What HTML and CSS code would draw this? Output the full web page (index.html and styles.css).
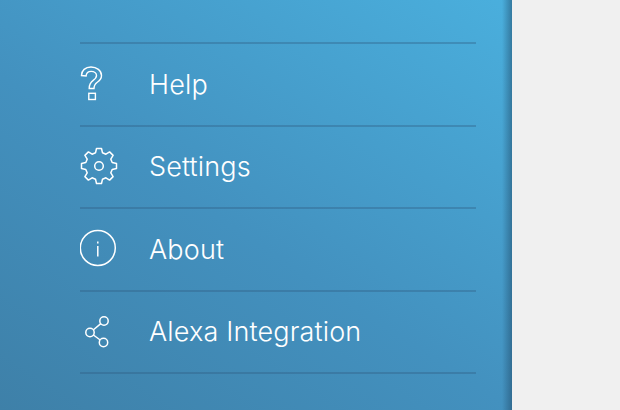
FILE: index.html
```html
<!DOCTYPE html>
<html lang="en">
<head>
<meta charset="utf-8">
<title>Menu</title>
<link rel="stylesheet" href="styles.css">
</head>
<body>
<nav class="panel">
  <ul class="menu">
    <li class="row">
      <span class="icon">
        <svg width="40" height="40" viewBox="0 0 40 40" fill="none" stroke="#fff" stroke-width="1.4">
          <path d="M1.500 11.500c0-5 3.800-8.500 9.500-8.500s10.500 3.500 10.500 8.400c0 3.200-1.900 5.200-4.200 6.800-2.300 1.600-3.300 3-3.300 6.300h-4.800c0-4.400 1.400-6.300 4-8.100 2-1.400 3.300-2.700 3.300-4.800 0-2.600-2.400-4.200-5.300-4.200-3 0-4.900 1.700-5.100 4.500z"/>
          <rect x="8.800" y="29.300" width="6.600" height="6.200"/>
        </svg>
      </span>
      <span class="label">Help</span>
    </li>
    <li class="row">
      <span class="icon">
        <svg width="40" height="40" viewBox="0 0 40 40" fill="none" stroke="#fff" stroke-width="1.500" stroke-linejoin="round">
          <path d="M16.500 1.500h5l1 4.300 3.400 1.400 3.700-2.300 3.500 3.500-2.300 3.700 1.400 3.400 4.300 1v5l-4.300 1-1.400 3.400 2.300 3.700-3.500 3.500-3.700-2.300-3.400 1.400-1 4.300h-5l-1-4.300-3.400-1.400-3.700 2.300-3.500-3.500 2.300-3.700-1.400-3.400-4.300-1v-5l4.300-1 1.400-3.400-2.300-3.700 3.500-3.500 3.700 2.300 3.400-1.400z"/>
          <circle cx="19" cy="19" r="4.300"/>
        </svg>
      </span>
      <span class="label">Settings</span>
    </li>
    <li class="row">
      <span class="icon">
        <svg width="40" height="40" viewBox="0 0 40 40" fill="none" stroke="#fff" stroke-width="1.500">
          <circle cx="17.800" cy="19" r="17.500"/>
          <path d="M17.800 17v10.500M17.800 12.500v2"/>
        </svg>
      </span>
      <span class="label">About</span>
    </li>
    <li class="row">
      <span class="icon">
        <svg width="40" height="40" viewBox="0 0 40 40" fill="none" stroke="#fff" stroke-width="1.500">
          <circle cx="24" cy="9" r="4.200"/>
          <circle cx="10" cy="20.500" r="4.200"/>
          <circle cx="23.500" cy="30.500" r="4.200"/>
          <path d="M20.800 11.700L13.200 18M13.400 23L20.200 28"/>
        </svg>
      </span>
      <span class="label">Alexa Integration</span>
    </li>
  </ul>
</nav>
</body>
</html>
```
FILE: styles.css
```css
* {
  box-sizing: border-box;
}

html,
body {
  margin: 0;
  height: 100%;
  overflow: hidden;
  background: #f0f0f0;
}

.panel {
  width: 512px;
  height: 410px;
  padding: 42px 36px 0 80px;
  background:
    linear-gradient(to right, rgba(30, 70, 100, 0) 0, rgba(30, 70, 100, 0) 502px, rgba(30, 70, 100, 0.5) 512px),
    linear-gradient(213deg, #4aafdd 0%, #4391bf 55%, #3e80a8 100%);
}

.menu {
  list-style: none;
  margin: 0;
  padding: 0;
  border-bottom: 2px solid rgba(45, 90, 125, 0.35);
}

.row {
  display: flex;
  align-items: center;
  height: 82.5px;
  border-top: 2px solid rgba(45, 90, 125, 0.35);
}

.icon {
  display: flex;
  flex: none;
  width: 69px;
  height: 40px;
}

.label {
  color: #fff;
  font-family: Inter, "Noto Sans", sans-serif;
  font-size: 27px;
  font-weight: 300;
  letter-spacing: 0.15px;
  line-height: 1;
}
```
